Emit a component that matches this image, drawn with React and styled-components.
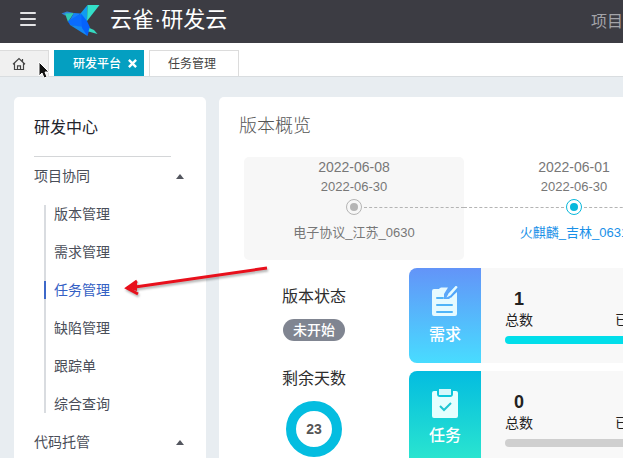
import React from "react";
import styled, { createGlobalStyle, css } from "styled-components";

const GlobalStyle = createGlobalStyle`
  * { box-sizing: border-box; }
  body {
    margin: 0;
    overflow: hidden;
    background: #e8edf1;
    color: #333;
    font-family: "Liberation Sans", "Noto Sans CJK SC", sans-serif;
    font-size: 14px;
    line-height: 20px;
  }
  button { padding: 0; border: 0; background: none; color: inherit; font: inherit; cursor: pointer; }
  a { color: inherit; text-decoration: none; }
  h1, h2, p, ul, ol { margin: 0; padding: 0; font-weight: 400; list-style: none; }
  svg { display: block; flex: none; }
`;

const Page = styled.div`
  position: relative;
  display: flex;
  flex-direction: column;
  height: 100vh;
  overflow: hidden;
`;

const Header = styled.header`
  display: flex;
  align-items: center;
  flex: none;
  height: 43px;
  padding-left: 20px;
  background: #3c3c43;
  color: #fff;
`;

const MenuButton = styled.button`
  display: flex;
  flex-direction: column;
  gap: 4px;
  width: 16px;
  margin-bottom: 6px;
  span { height: 2px; border-radius: 1px; background: #e4e4e6; }
`;

const Brand = styled.a`
  display: flex;
  align-items: center;
  gap: 10px;
  margin: 0 auto 4px 24px;
  font-size: 22px;
  line-height: 32px;
  font-weight: 400;
  white-space: nowrap;
`;

const HeaderLink = styled.a`
  color: #a3a3a8;
  font-size: 16px;
`;

const Tabs = styled.nav`
  display: flex;
  align-items: flex-end;
  flex: none;
  gap: 5px;
  height: 34px;
  background: #fff;
  border-bottom: 1px solid #d9dde0;
`;

const Tab = styled.div`
  display: flex;
  align-items: center;
  justify-content: center;
  gap: 7px;
  width: 90px;
  height: 26px;
  border: 1px solid #dcdcdc;
  border-bottom: 0;
  background: #fff;
  font-size: 12px;
  color: #444;
  ${(p) => p.$home && css`
    width: 49px;
    padding-right: 10px;
    border-left: 0;
    background: #f0f0f0;
  `}
  ${(p) => p.$active && css`
    padding-left: 12px;
    border-color: #049fc1;
    background: #049fc1;
    color: #fff;
    font-weight: 500;
  `}
  ${(p) => p.$plain && css`padding-right: 4px;`}
`;

const Content = styled.div`
  display: grid;
  grid-template-columns: 192px minmax(0, 1fr);
  gap: 13px;
  flex: 1;
  min-height: 0;
  padding: 20px 0 0 14px;
`;

const Sidebar = styled.aside`
  padding: 20px 20px 0;
  overflow: hidden;
  border-radius: 5px 5px 0 0;
  background: #fff;
`;

const SideTitle = styled.h1`
  width: 137px;
  height: 40px;
  border-bottom: 1px solid #d4d6d8;
  font-size: 16px;
  line-height: 22px;
  color: #22242c;
`;

const GroupButton = styled.button`
  display: flex;
  align-items: center;
  justify-content: space-between;
  width: 100%;
  height: 38px;
  padding-right: 2px;
  color: #4a4e59;
  &::after {
    content: "";
    border: 4px solid transparent;
    border-top: 0;
    border-bottom: 5px solid #53565e;
  }
`;

const MenuList = styled.ul`
  margin: 12px 10px 10px;
  border-left: 2px solid #d9dce0;
  line-height: 20px;
`;

const MenuItem = styled.li`
  display: flex;
  height: 18px;
  margin-left: -2px;
  padding-left: 8px;
  border-left: 2px solid ${(p) => (p.$active ? "#3d68c8" : "transparent")};
  color: ${(p) => (p.$active ? "#3460c4" : "#4a4e59")};
  line-height: 18px;
  & + & { margin-top: 20px; }
  &:first-child { margin-top: -2px; }
`;

const Main = styled.main`
  padding: 18px 0 0 20px;
  overflow: hidden;
  border-radius: 5px 0 0 0;
  background: #fff;
`;

const MainTitle = styled.h2`
  font-size: 18px;
  line-height: 22px;
  font-weight: 300;
  color: #555;
`;

const Timeline = styled.ol`
  display: flex;
  margin: 20px 0 0 5px;
`;

const Version = styled.li`
  display: flex;
  flex-direction: column;
  align-items: center;
  flex: none;
  width: 220px;
  height: 103px;
  border-radius: 5px;
  background: ${(p) => (p.$shaded ? "#f7f7f7" : "transparent")};
  color: #777;
  font-size: 13px;
  white-space: nowrap;
`;

const StartDate = styled.time`
  font-size: 14px;
  line-height: 20px;
`;

const Track = styled.div`
  display: grid;
  grid-template-columns: 1fr 18px 1fr;
  align-items: center;
  gap: 1px;
  width: 100%;
  height: 20px;
`;

const Dash = styled.span`
  border-top: 1px dashed ${(p) => (p.$hidden ? "transparent" : "#b4b4b4")};
`;

const Dot = styled.span`
  width: 16px;
  height: 16px;
  margin: 0 1px;
  padding: 3px;
  border: 1px solid ${(p) => p.$color};
  border-radius: 50%;
  background: ${(p) => p.$color} content-box;
`;

const VersionLink = styled.a`
  margin-top: 6px;
  color: ${(p) => (p.$current ? "#1890e8" : "#777")};
`;

const Summary = styled.div`
  display: grid;
  grid-template-columns: 150px minmax(0, 1fr);
  gap: 20px;
  margin-top: 8px;
`;

const StatusColumn = styled.div`
  display: flex;
  flex-direction: column;
  align-items: center;
  padding-top: 18px;
  font-size: 16px;
  line-height: 22px;
  color: #2d2d2d;
`;

const Status = styled.span`
  margin: 11px 0 27px;
  padding: 0 10px;
  border-radius: 11px;
  background: #808591;
  color: #fff;
  font-size: 14px;
  line-height: 22px;
  font-weight: 500;
`;

const Donut = styled.strong`
  display: grid;
  place-items: center;
  width: 56px;
  height: 56px;
  margin-top: 11px;
  border: 10px solid #04bde0;
  border-radius: 50%;
  color: #555;
  font-size: 14px;
`;

const StatList = styled.div`
  display: flex;
  flex-direction: column;
  gap: 8px;
`;

const Stat = styled.section`
  display: grid;
  grid-template-columns: 72px minmax(0, 1fr);
  height: 95px;
  overflow: hidden;
  border-radius: 8px 0 0 8px;
  background: #f8f8f8;
`;

const StatTile = styled.div`
  display: flex;
  flex-direction: column;
  align-items: center;
  gap: 6px;
  padding-top: 17px;
  background: linear-gradient(${(p) => p.$from}, ${(p) => p.$to});
  color: #fff;
  font-size: 16px;
  line-height: 24px;
  font-weight: 500;
`;

const StatBody = styled.div`
  padding: 18px 0 0 24px;
  overflow: hidden;
`;

const Figures = styled.div`
  display: flex;
  gap: 82px;
  color: #222;
  white-space: nowrap;
`;

const Figure = styled.p`
  display: flex;
  flex-direction: column;
  justify-content: flex-end;
  align-items: center;
  flex: none;
  height: 44px;
  line-height: 20px;
  strong { font-size: 18px; line-height: 22px; }
`;

const Meter = styled.div`
  height: 8px;
  margin-top: 6px;
  border-radius: 4px 0 0 4px;
  background: ${(p) => p.$color};
`;

const Pointer = styled.svg`
  position: absolute;
  left: 36px;
  top: 60px;
`;

const Arrow = styled.svg`
  position: absolute;
  left: 120px;
  top: 260px;
  filter: drop-shadow(1px 2px 1px rgba(0, 0, 0, 0.3));
`;

function BirdLogo() {
  return (
    <svg width="40" height="34" viewBox="0 0 40 34" aria-hidden="true">
      <path d="M1.5 10.5 7 8.5 14 10 5 12.5Z" fill="#2f7fd6" />
      <path d="M5 10.5 14 10 8 19Z" fill="#2fc9b4" />
      <path d="M14 10 21 10.5 8 20Z" fill="#1580fa" />
      <path d="M8 18 21 10.5 24 25 10 22Z" fill="#0a6cff" />
      <path d="M10 22 24 24 27.5 33Z" fill="#1489f0" />
      <path d="M20.5 10.5 27.5 2 27 18 24 25Z" fill="#109bf0" />
      <path d="M27.5 2H39.5L27 18Z" fill="#33dfc8" />
      <path d="M21 10.5 27 18 30 24.5 27.5 33 22 25Z" fill="#0562fb" />
      <path d="M29.5 25 34 27 37.5 31 28.5 28.5Z" fill="#36d9c0" />
    </svg>
  );
}

function HomeIcon() {
  return (
    <svg width="14" height="14" viewBox="0 0 14 14" fill="none" stroke="#444" strokeWidth="1.2" aria-hidden="true">
      <path d="m1 7.3 6-5.8 6 5.8M2.5 6v6.5h9V6M10.5 4.5V2M5.5 12.5V8.8h3v3.7" />
    </svg>
  );
}

function CloseIcon() {
  return (
    <svg width="9" height="9" viewBox="0 0 10 10" stroke="#fff" strokeWidth="2.6" aria-hidden="true">
      <path d="m1 1 8 8M9 1 1 9" />
    </svg>
  );
}

function RequirementIcon() {
  return (
    <svg width="28" height="32" viewBox="0 0 28 32" aria-hidden="true">
      <path d="M3 4H8Q9 2 11 2.5H17L13 9v5h5l8-7v22q0 2-2 2H3q-2 0-2-2V6q0-2 2-2Z" fill="#e6faff" />
      <path d="m18 11 7.500-8.500" fill="none" stroke="#50a6fa" strokeWidth="5.500" />
      <path d="m15.500 12.500 2-4 7-7.500q2-.500 2 1.500l-7 8Z" fill="#e6faff" />
      <path d="M6 13h6M6 20h15M6 27h15" stroke="#50b4f8" strokeWidth="2" strokeLinecap="round" />
    </svg>
  );
}

function TaskIcon() {
  return (
    <svg width="28" height="30" viewBox="0 0 28 30" aria-hidden="true">
      <path d="M3 3h3v3q0 3 3 3h10q3 0 3-3V3h3q2 0 2 2v23q0 2-2 2H3q-2 0-2-2V5q0-2 2-2Z" fill="#e5ffff" />
      <path d="M8 1h12v6H8Z" fill="#d6f8fb" />
      <path d="m9 18 4 4 7-7" fill="none" stroke="#20c5d2" strokeWidth="2" />
    </svg>
  );
}

const menuItems = ["版本管理", "需求管理", "任务管理", "缺陷管理", "跟踪单", "综合查询"];

const versions = [
  { start: "2022-06-08", end: "2022-06-30", name: "电子协议_江苏_0630", shaded: true, color: "#b5b5b5" },
  { start: "2022-06-01", end: "2022-06-30", name: "火麒麟_吉林_0631", current: true, color: "#08b8dc" },
];

const stats = [
  { label: "需求", total: 1, from: "#6394f8", to: "#48dcff", meter: "#02deea", Icon: RequirementIcon },
  { label: "任务", total: 0, from: "#03bce0", to: "#2de8ce", meter: "#cfcfcf", Icon: TaskIcon },
];

export default function App() {
  return (
    <Page>
      <GlobalStyle />
      <Header>
        <MenuButton aria-label="菜单"><span /><span /><span /></MenuButton>
        <Brand href="#"><BirdLogo />云雀·研发云</Brand>
        <HeaderLink href="#">项目</HeaderLink>
      </Header>
      <Tabs>
        <Tab $home><a href="#" aria-label="首页"><HomeIcon /></a></Tab>
        <Tab $active><a href="#">研发平台</a><button aria-label="关闭"><CloseIcon /></button></Tab>
        <Tab $plain><a href="#">任务管理</a></Tab>
      </Tabs>
      <Content>
        <Sidebar>
          <SideTitle>研发中心</SideTitle>
          <GroupButton>项目协同</GroupButton>
          <MenuList>
            {menuItems.map((item) => (
              <MenuItem key={item} $active={item === "任务管理"}><a href="#">{item}</a></MenuItem>
            ))}
          </MenuList>
          <GroupButton>代码托管</GroupButton>
        </Sidebar>
        <Main>
          <MainTitle>版本概览</MainTitle>
          <Timeline>
            {versions.map((v, i) => (
              <Version key={v.name} $shaded={v.shaded}>
                <StartDate>{v.start}</StartDate>
                <time>{v.end}</time>
                <Track><Dash $hidden={i === 0} /><Dot $color={v.color} /><Dash /></Track>
                <VersionLink href="#" $current={v.current}>{v.name}</VersionLink>
              </Version>
            ))}
          </Timeline>
          <Summary>
            <StatusColumn>
              <p>版本状态</p>
              <Status>未开始</Status>
              <p>剩余天数</p>
              <Donut>23</Donut>
            </StatusColumn>
            <StatList>
              {stats.map(({ label, total, from, to, meter, Icon }) => (
                <Stat key={label}>
                  <StatTile $from={from} $to={to}><Icon />{label}</StatTile>
                  <StatBody>
                    <Figures>
                      <Figure><strong>{total}</strong>总数</Figure>
                      <Figure>已</Figure>
                    </Figures>
                    <Meter $color={meter} />
                  </StatBody>
                </Stat>
              ))}
            </StatList>
          </Summary>
        </Main>
      </Content>
      <Pointer width="14" height="20" viewBox="0 0 14 20" aria-hidden="true">
        <path d="M3 2v14l3-3 2 5 3-1-2-5h4Z" fill="#111" stroke="#fff" />
      </Pointer>
      <Arrow width="152" height="40" viewBox="0 0 152 40" fill="none" stroke="#e8101c" strokeWidth="3" aria-hidden="true">
        <path d="M147 8 8 28M17 21 7 28l11 6" />
        <path d="m6 28 11-6v9Z" fill="#e8101c" stroke="none" />
      </Arrow>
    </Page>
  );
}
